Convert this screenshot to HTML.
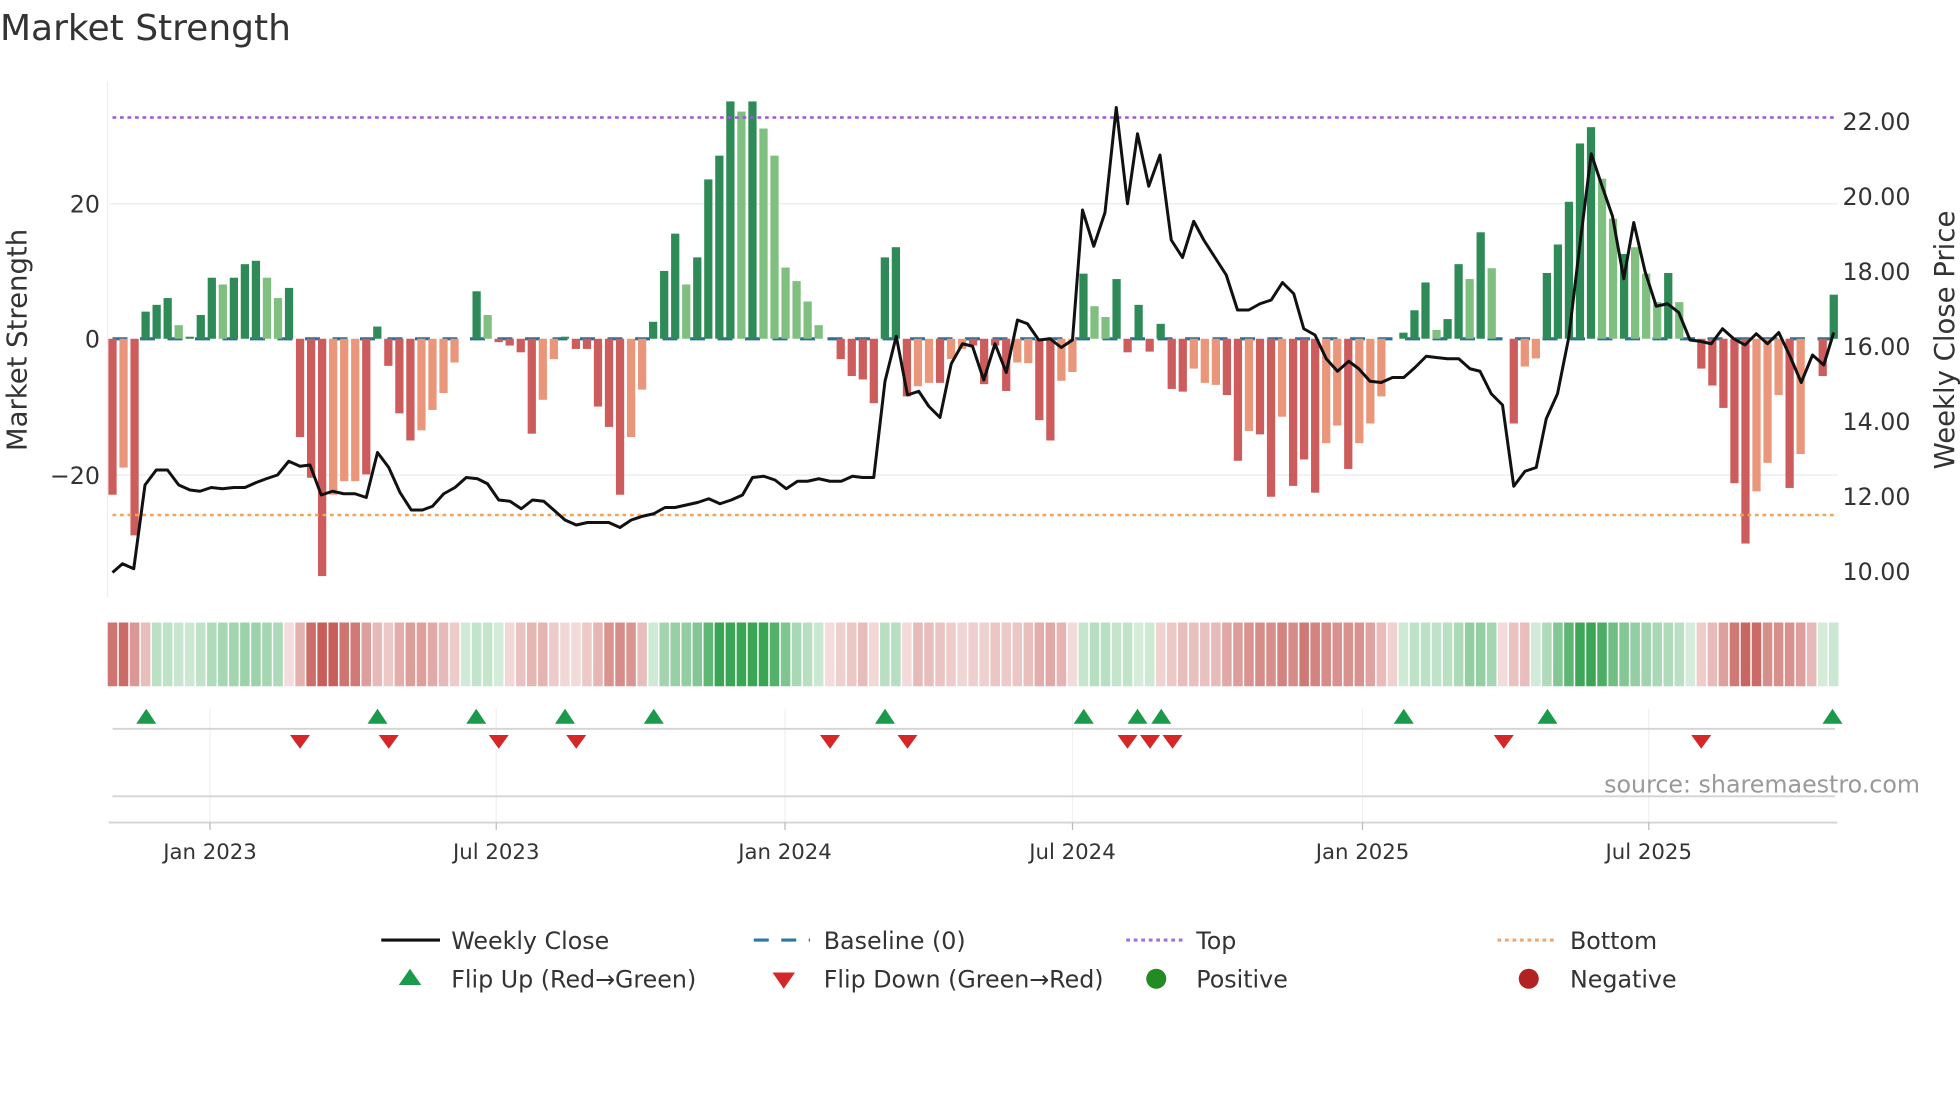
<!DOCTYPE html>
<html><head><meta charset="utf-8"><style>
html,body{margin:0;padding:0;background:#fff;width:1960px;height:1102px;overflow:hidden}
svg text{font-family:"DejaVu Sans","Liberation Sans",sans-serif;fill:#333}
</style></head><body>
<svg id="s" width="1960" height="1102" viewBox="0 0 1568 881.6" xmlns="http://www.w3.org/2000/svg">
<text x="0" y="32" font-size="28.8" fill="#333">Market Strength</text>
<line x1="86" y1="65" x2="86" y2="478" stroke="#eee" stroke-width="1"/>
<line x1="87" y1="163" x2="1470" y2="163" stroke="#eee" stroke-width="1.2"/>
<line x1="87" y1="380" x2="1470" y2="380" stroke="#eee" stroke-width="1.2"/>
<text x="80" y="170" font-size="19" text-anchor="end">20</text>
<text x="80" y="278" font-size="19" text-anchor="end">0</text>
<text x="80" y="387" font-size="19" text-anchor="end">−20</text>
<text transform="translate(21,272) rotate(-90)" font-size="22" text-anchor="middle">Market Strength</text>
<text transform="translate(1563,272) rotate(-90)" font-size="22" text-anchor="middle">Weekly Close Price</text>
<g font-size="19">
<text x="1474" y="104">22.00</text><text x="1474" y="164">20.00</text><text x="1474" y="224">18.00</text>
<text x="1474" y="284">16.00</text><text x="1474" y="344">14.00</text><text x="1474" y="404">12.00</text><text x="1474" y="464">10.00</text>
</g>
<line x1="90" y1="271" x2="1470" y2="271" stroke="#2a6f97" stroke-width="2.5" stroke-dasharray="12 10"/>
<g id="bars"></g>
<line x1="90" y1="94" x2="1470" y2="94" stroke="#9b59d6" stroke-width="2" stroke-dasharray="3 3"/>
<line x1="90" y1="412" x2="1470" y2="412" stroke="#f0a35a" stroke-width="2" stroke-dasharray="3 3"/>
<polyline id="price" fill="none" stroke="#111" stroke-width="2.4" stroke-linejoin="round"/>
<g id="heat"></g>
<g stroke="#eef0f2" stroke-width="1">
<line x1="168" y1="567" x2="168" y2="658"/><line x1="397" y1="567" x2="397" y2="658"/><line x1="628" y1="567" x2="628" y2="658"/>
<line x1="858" y1="567" x2="858" y2="658"/><line x1="1090" y1="567" x2="1090" y2="658"/><line x1="1319" y1="567" x2="1319" y2="658"/>
</g>
<line x1="90" y1="583" x2="1468" y2="583" stroke="#d4d4d4" stroke-width="1.5"/>
<line x1="90" y1="637" x2="1468" y2="637" stroke="#d4d4d4" stroke-width="1.5"/>
<line x1="87" y1="658" x2="1470" y2="658" stroke="#d4d4d4" stroke-width="1.5"/>
<g stroke="#bbb" stroke-width="1">
<line x1="168" y1="658" x2="168" y2="664"/><line x1="397" y1="658" x2="397" y2="664"/><line x1="628" y1="658" x2="628" y2="664"/>
<line x1="858" y1="658" x2="858" y2="664"/><line x1="1090" y1="658" x2="1090" y2="664"/><line x1="1319" y1="658" x2="1319" y2="664"/>
</g>
<g id="flips"></g>
<g font-size="17" text-anchor="middle">
<text x="168" y="687">Jan 2023</text><text x="397" y="687">Jul 2023</text><text x="628" y="687">Jan 2024</text>
<text x="858" y="687">Jul 2024</text><text x="1090" y="687">Jan 2025</text><text x="1319" y="687">Jul 2025</text>
</g>
<text x="1536" y="634" font-size="19" text-anchor="end" fill="#999" style="fill:#999">source: sharemaestro.com</text>
<g font-size="19">
<line x1="305" y1="752" x2="352" y2="752" stroke="#111" stroke-width="2.5"/>
<text x="361" y="759">Weekly Close</text>
<line x1="603" y1="752" x2="648" y2="752" stroke="#2a78a8" stroke-width="2.5" stroke-dasharray="12 10"/>
<text x="659" y="759">Baseline (0)</text>
<line x1="901" y1="752" x2="946" y2="752" stroke="#a070e0" stroke-width="2.5" stroke-dasharray="3 3"/>
<text x="957" y="759">Top</text>
<line x1="1198" y1="752" x2="1243" y2="752" stroke="#f0a870" stroke-width="2.5" stroke-dasharray="3 3"/>
<text x="1256" y="759">Bottom</text>
<polygon points="319,788 337,788 328,775" fill="#1a9a4a"/>
<text x="361" y="790">Flip Up (Red→Green)</text>
<polygon points="618,778 636,778 627,791" fill="#d62728"/>
<text x="659" y="790">Flip Down (Green→Red)</text>
<circle cx="925" cy="783" r="8" fill="#228b22"/>
<text x="957" y="790">Positive</text>
<circle cx="1223" cy="783" r="8" fill="#b22222"/>
<text x="1256" y="790">Negative</text>
</g>
</svg>
<script>
var NS="http://www.w3.org/2000/svg";
var d=[[-23,'R'],[-19,'O'],[-29,'R'],[4,'G'],[5,'G'],[6,'G'],[2,'L'],[0.3,'G'],[3.5,'G'],[9,'G'],[8,'L'],[9,'G'],[11,'G'],[11.5,'G'],[9,'L'],[6,'L'],[7.5,'G'],[-14.5,'R'],[-20.5,'R'],[-35,'R'],[-23,'O'],[-21,'O'],[-21,'O'],[-20,'R'],[1.8,'G'],[-4,'R'],[-11,'R'],[-15,'R'],[-13.5,'O'],[-10.5,'O'],[-8,'O'],[-3.5,'O'],[0,'R'],[7,'G'],[3.5,'L'],[-0.5,'R'],[-1,'R'],[-2,'R'],[-14,'R'],[-9,'O'],[-3,'O'],[0.3,'G'],[-1.5,'R'],[-1.5,'R'],[-10,'R'],[-13,'R'],[-23,'R'],[-14.5,'O'],[-7.5,'O'],[2.5,'G'],[10,'G'],[15.5,'G'],[8,'L'],[12,'G'],[23.5,'G'],[27,'G'],[35,'G'],[33.5,'L'],[35,'G'],[31,'L'],[27,'L'],[10.5,'L'],[8.5,'L'],[5.5,'L'],[2,'L'],[0,'R'],[-3,'R'],[-5.5,'R'],[-6,'R'],[-9.5,'R'],[12,'G'],[13.5,'G'],[-8.5,'R'],[-7,'O'],[-6.5,'O'],[-6.5,'R'],[-3,'O'],[-1.5,'O'],[-1,'R'],
[-6.7,'R'],[-1,'R'],[-7.7,'R'],[-3.5,'O'],[-3.6,'O'],[-12,'R'],[-15,'R'],[-6.2,'O'],[-4.9,'O'],[9.6,'G'],[4.8,'L'],[3.2,'L'],[8.8,'G'],[-2,'R'],[5,'G'],[-1.9,'R'],[2.2,'G'],[-7.4,'R'],[-7.8,'R'],[-4.4,'O'],[-6.5,'O'],[-6.8,'O'],[-8.3,'R'],[-18,'R'],[-13.6,'O'],[-14.1,'R'],[-23.3,'R'],[-11.5,'O'],[-21.7,'R'],[-17.8,'R'],[-22.7,'R'],[-15.4,'O'],[-12.8,'O'],[-19.2,'R'],[-15.4,'O'],[-12.5,'O'],[-8.5,'O'],[0,'R'],[0.9,'G'],[4.2,'G'],[8.3,'G'],[1.3,'L'],[2.9,'G'],[11,'G'],[8.8,'L'],[15.7,'G'],[10.4,'L'],[0,'R'],[-12.5,'R'],[-4.1,'O'],[-2.9,'O'],[9.7,'G'],[13.9,'G'],[20.2,'G'],[28.8,'G'],[31.2,'G'],[23.6,'L'],[17.7,'L'],[12.5,'G'],[13.5,'L'],[9.6,'L'],[5.4,'L'],[9.7,'G'],[5.4,'L'],[0,'R'],[-4.4,'R'],[-6.9,'R'],[-10.2,'R'],[-21.3,'R'],[-30.2,'R'],[-22.5,'O'],[-18.3,'O'],[-8.3,'O'],[-22,'R'],[-17,'O'],[0,'R'],[-5.5,'R'],[6.5,'G']];
var col={R:'#cd5c5c',O:'#e9967a',G:'#2e8b57',L:'#7fbf7f'};
var bars=document.getElementById('bars'),heat=document.getElementById('heat');
var step=(1467-90)/(d.length-1);
function mix(a,b,t){return 'rgb('+a.map(function(v,i){return Math.round(v+(b[i]-v)*t)}).join(',')+')'}
for(var i=0;i<d.length;i++){
 var v=d[i][0],x=90+i*step,h=Math.abs(v)*5.425;
 if(h>0.3){var r=document.createElementNS(NS,'rect');r.setAttribute('x',x-3.3);r.setAttribute('width',6.6);
 r.setAttribute('y',v>0?271-h:271);r.setAttribute('height',h);r.setAttribute('fill',col[d[i][1]]);bars.appendChild(r);}
 var s=0;for(var k=-1;k<=1;k++){var j=Math.min(d.length-1,Math.max(0,i+k));s+=d[j][0];}s/=3;
 var t=Math.min(1,0.2+Math.abs(s)/34);
 var c=s>=0?mix([255,255,255],[58,166,85],t):mix([255,255,255],[196,90,85],t);
 var q=document.createElementNS(NS,'rect');q.setAttribute('x',x-step/2+0.6);q.setAttribute('width',step-1.2);
 q.setAttribute('y',498);q.setAttribute('height',51);q.setAttribute('fill',c);heat.appendChild(q);
}
var p=[90,458,98,451,107,455,116,388,125,376,134,376,143,388,152,392,160,393,169,390,178,391,187,390,196,390,205,386,213,383,222,380,231,369,240,373,248,372,257,396,266,393,275,395,284,395,293,398,302,362,311,374,320,394,329,408,338,408,346,405,355,395,364,390,373,382,382,383,390,387,399,400,408,401,417,407,426,400,435,401,443,408,452,416,461,420,470,418,479,418,487,418,496,422,505,416,514,413,523,411,532,406,540,406,549,404,558,402,567,399,576,403,585,400,594,396,602,382,611,381,620,384,629,391,638,385,646,385,655,383,664,385,673,385,682,381,690,382,699,382,708,305,717,269,726,316,735,313,743,325,752,334,761,291,770,275,778,277,787,304,796,275,805,298,814,256,822,259,831,272,840,271,849,278,858,272,866,168,875,197,884,170,893,86,902,163,910,107,919,149,928,124,937,192,946,206,955,177,963,192,972,206,981,220,990,248,999,248,1008,243,1017,240,1026,226,1035,235,1043,263,1052,268,1061,287,1070,297,1079,289,1087,295,1096,305,1105,306,1114,302,1123,302,1132,294,1141,285,1149,286,1158,287,1167,287,1176,295,1184,297,1193,315,1202,324,1211,389,1220,377,1229,374,1237,335,1246,315,1255,270,1264,195,1273,123,1281,147,1290,173,1299,223,1307,178,1316,217,1325,245,1334,243,1343,250,1352,272,1360,273,1369,275,1378,263,1387,271,1396,276,1405,267,1414,275,1423,266,1432,285,1441,306,1450,284,1459,292,1467,266];
document.getElementById('price').setAttribute('points',p.join(' '));
var f=document.getElementById('flips');
[117,302,381,452,523,708,867,910,929,1123,1238,1466].forEach(function(x){var g=document.createElementNS(NS,'polygon');
 g.setAttribute('points',(x-8)+',579 '+(x+8)+',579 '+x+',567');g.setAttribute('fill','#1a9a4a');f.appendChild(g);});
[240,311,399,461,664,726,902,920,938,1203,1361].forEach(function(x){var g=document.createElementNS(NS,'polygon');
 g.setAttribute('points',(x-8)+',588 '+(x+8)+',588 '+x+',599');g.setAttribute('fill','#d62728');f.appendChild(g);});
</script>
</body></html>
